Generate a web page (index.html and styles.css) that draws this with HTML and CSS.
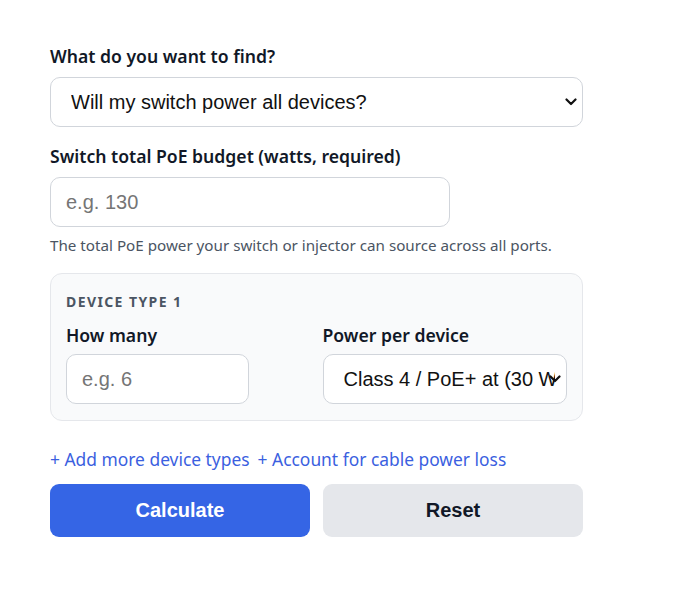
FILE: index.html
```html
<!DOCTYPE html>
<html lang="en">
<head>
<meta charset="utf-8">
<title>PoE Budget Calculator</title>
<link rel="stylesheet" href="styles.css">
</head>
<body>
<main class="calc">
  <div class="field">
    <label class="label" for="goal">What do you want to find?</label>
    <select id="goal" class="control select select-wide">
      <option>Will my switch power all devices?</option>
    </select>
  </div>
  <div class="field">
    <label class="label" for="budget">Switch total PoE budget (watts, required)</label>
    <input id="budget" class="control input-budget" type="text" placeholder="e.g. 130">
    <p class="help">The total PoE power your switch or injector can source across all ports.</p>
  </div>
  <section class="card">
    <h3 class="card-title">Device type 1</h3>
    <div class="card-grid">
      <div class="cell">
        <label class="label label-sm" for="count">How many</label>
        <input id="count" class="control input-count" type="text" placeholder="e.g. 6">
      </div>
      <div class="cell">
        <label class="label label-sm" for="class">Power per device</label>
        <select id="class" class="control select select-class">
          <option>Class 4 / PoE+ at (30 W)</option>
        </select>
      </div>
    </div>
  </section>
  <div class="links">
    <a class="link" href="#">+ Add more device types</a>
    <a class="link" href="#">+ Account for cable power loss</a>
  </div>
  <div class="actions">
    <button class="btn btn-primary" type="button">Calculate</button>
    <button class="btn btn-secondary" type="button">Reset</button>
  </div>
</main>
</body>
</html>
```
FILE: styles.css
```css
* { box-sizing: border-box; }
html, body { margin: 0; padding: 0; background: #ffffff; }
body { font-family: "Noto Sans", "Open Sans", sans-serif; color: #111827; }
.calc { width: 533px; margin-left: 50px; padding-top: 45px; }
.field { margin-bottom: 18px; }
.label {
  display: block;
  font-size: 17.6px;
  font-weight: 600;
  line-height: 22px;
  margin-bottom: 10px;
  color: #111827;
}
.control {
  display: block;
  height: 50px;
  border: 1px solid #d1d5db;
  border-radius: 10px;
  background-color: #ffffff;
  font-family: "Liberation Sans", Arial, sans-serif;
  font-size: 20px;
  color: #111111;
  padding: 0 15px;
  margin: 0;
}
.control::placeholder { color: #757575; }
.select {
  -webkit-appearance: none;
  appearance: none;
  background-image: url("data:image/svg+xml,%3Csvg xmlns='http://www.w3.org/2000/svg' width='12' height='8' viewBox='0 0 12 8'%3E%3Cpath d='M1.5 1.5 6 6 10.5 1.5' fill='none' stroke='%23111' stroke-width='2.2' stroke-linecap='round' stroke-linejoin='round'/%3E%3C/svg%3E");
  background-repeat: no-repeat;
  background-size: 12px 8px;
  padding-left: 20px;
}
.select-wide { width: 533px; padding-right: 30px; background-position: right 5px center; }
.input-budget { width: 400px; }
.help {
  margin: 8px 0 0;
  font-size: 15.2px;
  line-height: 20px;
  color: #4b5563;
}
.card {
  margin-top: 18px;
  border: 1px solid #e5e7eb;
  border-radius: 12px;
  background: #f9fafb;
  padding: 15px 15px 16px;
}
.card-title {
  margin: 3px 0 12px;
  font-size: 14px;
  line-height: 20px;
  font-weight: 700;
  letter-spacing: 0.1em;
  text-transform: uppercase;
  color: #4b5563;
}
.card-grid {
  display: grid;
  grid-template-columns: 1fr 1fr;
  column-gap: 12px;
}
.label-sm { line-height: 22px; margin-bottom: 8px; }
.input-count { width: 183px; }
.select-class { width: 100%; padding-right: 11px; background-position: right 5px center; }
.links {
  display: flex;
  gap: 8px;
  margin-top: 26px;
  line-height: 24px;
}
.link {
  font-size: 17.4px;
  color: #3b5fe0;
  text-decoration: none;
}
.actions {
  display: grid;
  grid-template-columns: 1fr 1fr;
  column-gap: 13px;
  margin-top: 13px;
}
.btn {
  height: 53px;
  border: 0;
  border-radius: 9px;
  font-family: "Liberation Sans", Arial, sans-serif;
  font-size: 20px;
  font-weight: 700;
  cursor: pointer;
}
.btn-primary { background: #3565e5; color: #ffffff; }
.btn-secondary { background: #e5e7eb; color: #111827; }
```
